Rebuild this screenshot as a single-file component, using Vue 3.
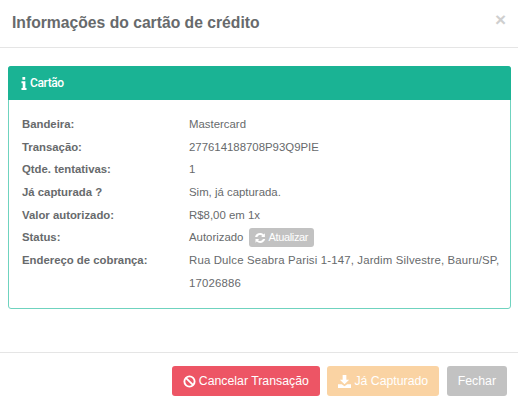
<script setup>
const rows = [
  ['Bandeira:', 'Mastercard'],
  ['Transação:', '277614188708P93Q9PIE'],
  ['Qtde. tentativas:', '1'],
  ['Já capturada ?', 'Sim, já capturada.'],
  ['Valor autorizado:', 'R$8,00 em 1x'],
]
</script>

<template>
  <div class="modal">
    <header class="head">
      <h4 class="title">Informações do cartão de crédito</h4>
      <span class="close">×</span>
    </header>
    <section class="body">
      <div class="panel">
        <div class="panel-head">
          <svg class="info" viewBox="0 0 6 14" width="6" height="13"><path fill="#fff" d="M1.300 0h3v3h-3zM.3 4.600h4.200v7.200h1.200V14H.3v-2.200h1.300V6.800H.3z"/></svg>
          <span>Cartão</span>
        </div>
        <div class="panel-body">
          <div v-for="r in rows" :key="r[0]" class="row">
            <div class="label">{{ r[0] }}</div>
            <div class="value">{{ r[1] }}</div>
          </div>
          <div class="row">
            <div class="label">Status:</div>
            <div class="value status">
              <span>Autorizado</span>
              <span class="mini">
                <svg viewBox="0 0 16 16" width="12" height="12"><path fill="#fff" d="M15 9.400c-.7 3-3.500 5.300-6.800 5.300-1.800 0-3.400-.7-4.700-1.900L2 14.300V9.400h4.900l-1.500 1.500c.7.700 1.700 1.200 2.800 1.200 1.600 0 2.900-.9 3.500-2.300.1-.2.200-.3.300-.4zM14.500 1.700v4.900H9.600l1.500-1.500C10.300 4.400 9.300 4 8.200 4 6.600 4 5.300 4.900 4.700 6.200c-.1.200-.2.300-.3.400H1.400C2 3.500 4.800 1.300 8.200 1.300c1.800 0 3.500.7 4.800 1.900z"/></svg>
                <span>Atualizar</span>
              </span>
            </div>
          </div>
          <div class="row addr">
            <div class="label">Endereço de cobrança:</div>
            <div class="value addr-value">Rua Dulce Seabra Parisi 1-147, Jardim Silvestre, Bauru/SP,<br>17026886</div>
          </div>
        </div>
      </div>
    </section>
    <footer class="foot">
      <button class="btn danger">
        <svg viewBox="0 0 14 14" width="13" height="13"><circle cx="7" cy="7" r="5.500" fill="none" stroke="#fff" stroke-width="2"/><path d="M3 3l8 8" stroke="#fff" stroke-width="2"/></svg>
        Cancelar Transação
      </button>
      <button class="btn warn">
        <svg viewBox="0 0 14 14" width="13" height="13"><path fill="#fff" d="M5 0h4v5h3L7 10 2 5h3zM0 10h4l3 2 3-2h4v4H0z"/></svg>
        Já Capturado
      </button>
      <button class="btn gray">Fechar</button>
    </footer>
  </div>
</template>

<style>
html, body { margin: 0; background: #fff; }
</style>

<style scoped>
.modal {
  width: 518px;
  height: 406px;
  display: flex;
  flex-direction: column;
  font-family: "Liberation Sans", Roboto, sans-serif;
  font-size: 11.4px;
  color: #676a6c;
  background: #fff;
  overflow: hidden;
  box-sizing: border-box;
}
.head {
  height: 48px;
  box-sizing: border-box;
  border-bottom: 1px solid #e5e5e5;
  display: flex;
  align-items: center;
  justify-content: space-between;
  padding: 0 12px;
}
.title {
  margin: -2px 0 0;
  font-size: 15.7px;
  font-weight: 700;
  color: #676a6c;
}
.close {
  font-size: 19px;
  font-weight: 700;
  color: #cfcfcf;
  line-height: 1;
  margin-top: -8px;
}
.body {
  flex: 1;
  padding: 18px 7px 0 8px;
}
.panel {
  height: 243px;
  box-sizing: border-box;
  border: 1px solid #6fd3bf;
  border-radius: 3px;
}
.panel-head {
  height: 34px;
  margin: -1px -1px 0;
  background: #1ab394;
  border-radius: 3px 3px 0 0;
  color: #fff;
  font-family: Roboto, "Liberation Sans", sans-serif;
  font-size: 12px;
  font-weight: 500;
  letter-spacing: -0.4px;
  display: flex;
  align-items: center;
  gap: 3px;
  padding-left: 13px;
}
.panel-body {
  padding: 13px 13px 0;
}
.row {
  display: flex;
  height: 22.7px;
  line-height: 22.7px;
}
.label {
  width: 167px;
  flex: none;
  font-weight: 700;
  font-size: 11.35px;
}
.status {
  display: flex;
  align-items: center;
  gap: 6px;
}
.mini {
  display: inline-flex;
  align-items: center;
  gap: 2px;
  height: 19px;
  line-height: 19px;
  padding: 0 6px 0 5px;
  background: #c2c2c2;
  border-radius: 3px;
  color: #fff;
  font-size: 11px;
  letter-spacing: -0.35px;
}
.addr {
  height: auto;
}
.addr-value {
  letter-spacing: 0.16px;
  white-space: nowrap;
}
.foot {
  height: 54px;
  box-sizing: border-box;
  border-top: 1px solid #e5e5e5;
  display: flex;
  justify-content: flex-end;
  align-items: flex-start;
  gap: 7.5px;
  padding: 13px 11px 0 0;
}
.btn {
  height: 30px;
  border: 0;
  border-radius: 3px;
  padding: 0 11px;
  color: #fff;
  font: 400 12.3px "Liberation Sans", Roboto, sans-serif;
  display: inline-flex;
  align-items: center;
  gap: 3px;
}
.danger { background: #ed5565; }
.warn { background: #fad3a3; }
.gray { background: #c2c2c2; }
</style>
